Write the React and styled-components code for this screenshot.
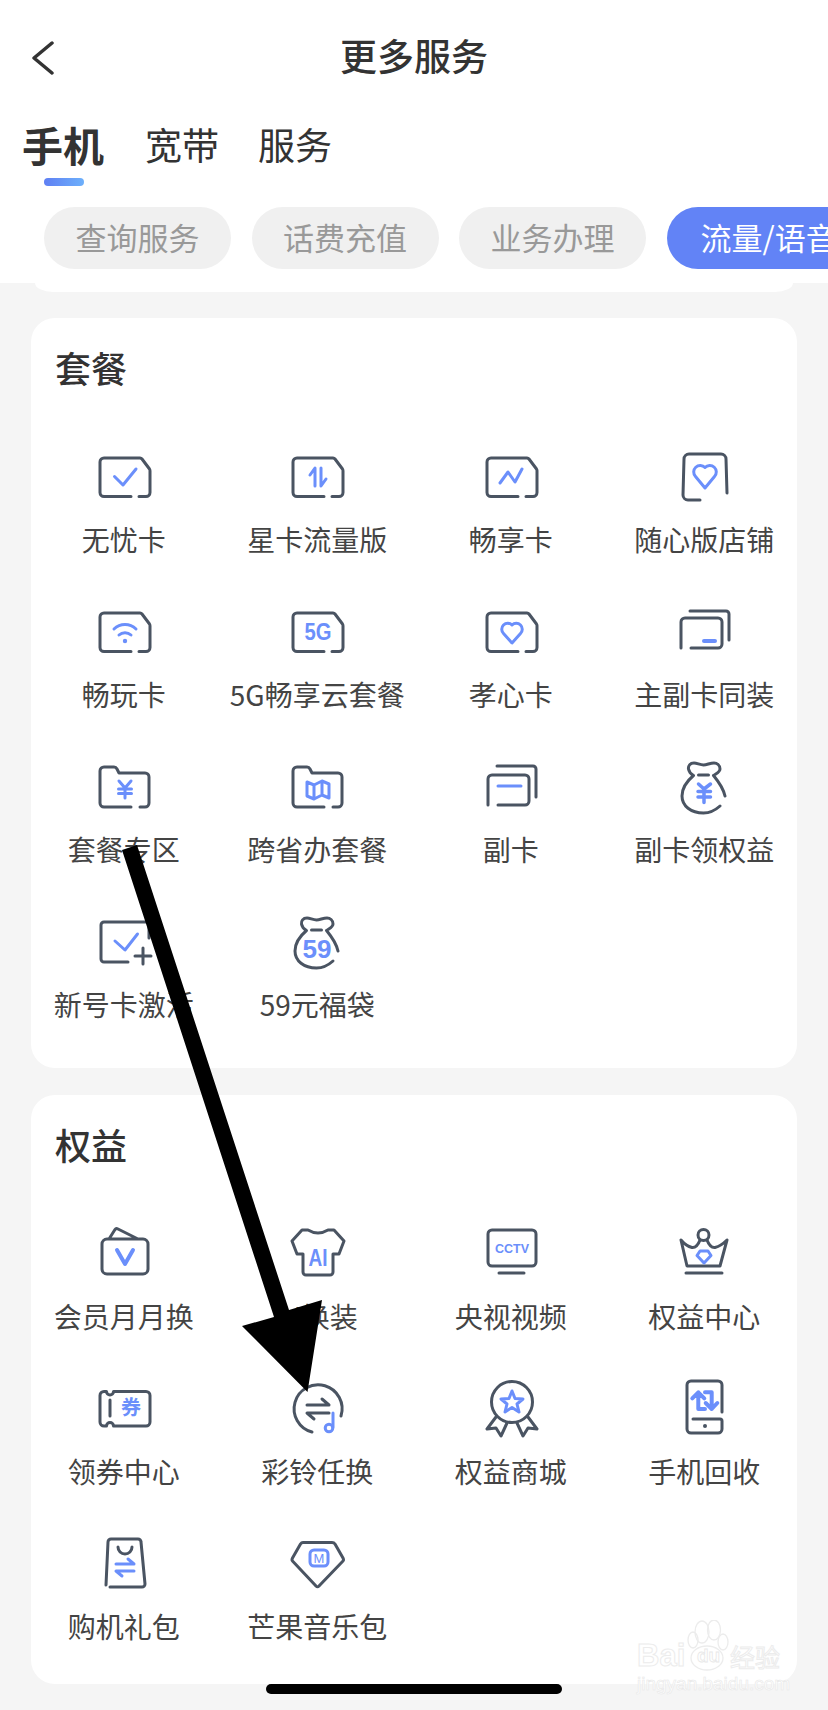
import React from "react";
import styled, { createGlobalStyle } from "styled-components";

const DARK = "#4a5462";
const BLUE = "#6b8ffb";
const CJK = `"Noto Sans CJK SC", "Liberation Sans", sans-serif`;

const Dark = ({ d, w = 3 }) => (
  <path d={d} fill="none" stroke={DARK} strokeWidth={w} strokeLinecap="round" strokeLinejoin="round" />
);
const Blue = ({ d, w = 3 }) => (
  <path d={d} fill="none" stroke={BLUE} strokeWidth={w} strokeLinecap="round" strokeLinejoin="round" />
);
const Label = ({ x = 32, y, size, font = "Liberation Sans", weight = 700, children, len }) => (
  <text x={x} y={y} fontSize={size} fontFamily={font} fontWeight={weight} fill={BLUE} textAnchor="middle" textLength={len} lengthAdjust={len ? "spacingAndGlyphs" : undefined}>
    {children}
  </text>
);
const Svg = ({ children }) => (
  <IconBox viewBox="0 0 64 64" aria-hidden="true">
    {children}
  </IconBox>
);

const SIM = "M38 51.5H11a4 4 0 0 1-4-4V17a4 4 0 0 1 4-4H47a2.5 2.5 0 0 1 2 1L56.5 24a3 3 0 0 1 .5 2V47.5a4 4 0 0 1-4 4H46";
const FOLDER = "M38 52H11a4 4 0 0 1-4-4V16a4 4 0 0 1 4-4H21q2 0 3 2l2 4H52a4 4 0 0 1 4 4V48a4 4 0 0 1-4 4H47";
const HEART = "M32 43L23.500 33.500a6 6 0 0 1 8.500-8.500a6 6 0 0 1 8.500 8.500Z";
const BAG =
  "M52 41C50 32 45 26 40.500 20.500C44 18 47 17 47 14C47 10 44 8 41 8C37 8 34 10 30.500 10C27 10 24 8 21 8C17 8 15 11 15.500 14C16 17 18 19 20.500 20.500C14 26 9 33 9 41C9 51 18 58 30.500 58C37 58 42 55.500 47 51M25.500 20H35.500";

const icons = {
  check: <><Dark d={SIM} /><Blue d="M21.500 31.500L30 40L43 24" /></>,
  updown: <><Dark d={SIM} /><Blue d="M29 41V23L24 30M35 23V41L40 34" /></>,
  trend: <><Dark d={SIM} /><Blue d="M20 38L28 27L35 37L42 24" /></>,
  store: (
    <>
      <Dark d="M54 48L53 14a5 5 0 0 0-5-5H16a5 5 0 0 0-5 5L10 50a5 5 0 0 0 5 5H27" />
      <Blue d="M32 43L22.500 31.500a6.500 6.500 0 0 1 9.500-9a6.500 6.500 0 0 1 9.500 9Z" />
    </>
  ),
  wifi: (
    <>
      <Dark d={SIM} />
      <Blue d="M21 29a16 16 0 0 1 22 0M26 35a9 9 0 0 1 12 0" />
      <circle cx="32" cy="41" r="2.200" fill={BLUE} />
    </>
  ),
  fiveG: <><Dark d={SIM} /><Label y={40} size={23} len={27}>5G</Label></>,
  heart: <><Dark d={SIM} /><Blue d={HEART} /></>,
  twin: (
    <>
      <Dark d="M8 48V22a4 4 0 0 1 4-4H45a4 4 0 0 1 4 4V44a4 4 0 0 1-4 4H18M17 11H53a3 3 0 0 1 3 3V40" />
      <Blue d="M31 41H42" w={4} />
    </>
  ),
  folderYen: <><Dark d={FOLDER} /><Blue d="M26 26L32 33L38 26M25.500 34H38.500M25.500 38.500H38.500M32 33V43" /></>,
  folderMap: <><Dark d={FOLDER} /><Blue d="M21 27L28 30L36 26L43 29V43L36 40L28 44L21 41ZM28 30V44M36 26V40" /></>,
  vice: (
    <>
      <Dark d="M8 50V24a4 4 0 0 1 4-4H45a4 4 0 0 1 4 4V46a4 4 0 0 1-4 4H18M17 11H53a3 3 0 0 1 3 3V42" />
      <Blue d="M18 31H41" />
    </>
  ),
  bagYen: <><Dark d={BAG} /><Blue d="M25.500 29L31 34L37.500 29M25 36.500H37.500M25 42H37.500M31 34V47.500" w={3.500} /></>,
  activate: (
    <>
      <Dark d="M35 52H11a3 3 0 0 1-3-3V15a3 3 0 0 1 3-3H53a3 3 0 0 1 3 3V28M50 38V54M42 46H58" />
      <Blue d="M22 31L32 40L44.500 24" />
    </>
  ),
  bag59: <><Dark d={BAG} /><Label x={31} y={48} size={25} len={29}>59</Label></>,
  wallet: (
    <>
      <Dark d="M14 17H50a5 5 0 0 1 5 5V47a5 5 0 0 1-5 5H14a5 5 0 0 1-5-5V22a5 5 0 0 1 5-5ZM16 17L22 7.500Q23 6 25 7L45 17" />
      <Blue d="M24 28L32 42L40 28" w={4} />
    </>
  ),
  shirt: (
    <>
      <Dark d="M22 8q10 6 20 0H48L58 19L53 32H47V50a3 3 0 0 1-3 3H20a3 3 0 0 1-3-3V32H11L6 19L16 8Z" />
      <Label y={44} size={23} len={19}>AI</Label>
    </>
  ),
  cctv: (
    <>
      <Dark d="M12 8H52a4 4 0 0 1 4 4V40a4 4 0 0 1-4 4H12a4 4 0 0 1-4-4V12a4 4 0 0 1 4-4ZM19 51H44" />
      <Label y={31} size={13} len={34}>CCTV</Label>
    </>
  ),
  crown: (
    <>
      <Dark d="M27 18Q24 26 19 25.500Q13 24 8 18L14 44H47L54 18Q48 24 42 25.500Q37 26 34 18M13 51H49" />
      <circle cx="30.500" cy="13" r="5.500" fill="none" stroke={DARK} strokeWidth="3" />
      <Blue d="M27 29H35L38 33.500L31 41L24 33.500Z" />
    </>
  ),
  ticket: (
    <>
      <Dark d="M20.500 14.500H53a4 4 0 0 1 4 4V45a4 4 0 0 1-4 4H20.500a3.500 3.500 0 0 0-7 0H11a4 4 0 0 1-4-4V18.500a4 4 0 0 1 4-4H13.500a3.500 3.500 0 0 0 7 0ZM17 23V39" />
      <Label x={38} y={38} size={20} font="Noto Sans CJK SC">券</Label>
    </>
  ),
  ring: (
    <>
      <Dark d="M26 55A24 24 0 1 1 55 39M21 28H43L36 22M43 36H21L28 42" />
      <Blue d="M47 36V50" />
      <circle cx="43" cy="51" r="3.800" fill="none" stroke={BLUE} strokeWidth="3" />
    </>
  ),
  medal: (
    <>
      <circle cx="32" cy="25" r="20.500" fill="none" stroke={DARK} strokeWidth="3" />
      <Dark d="M16 40L7 52L16 51L21 59L27 46M48 40L57 52L48 51L43 59L37 46" />
      <Blue d="M32 14L35 21.500L43 22L37 27L39 35L32 30.500L25 35L27 27L21 22L29 21.500Z" />
    </>
  ),
  phone: (
    <>
      <Dark d="M49 35V8a4 4 0 0 0-4-4H18a4 4 0 0 0-4 4V52a4 4 0 0 0 4 4H45a4 4 0 0 0 4-4V44a2 2 0 0 0-2-2H20" />
      <circle cx="32" cy="49" r="2" fill={DARK} />
      <Blue d="M32 32H25.300V15.300L19.300 21.300M25.300 15.300L31.300 21.300M32 15.300H38.700V32L32.700 26M38.700 32L44.300 26" w={4} />
    </>
  ),
  gift: (
    <>
      <Dark d="M13 53L15 10a3 3 0 0 1 3-3H45a3 3 0 0 1 3 3L52 52a3 3 0 0 1-3 3H17M25 15a7 7 0 0 0 14 0" />
      <Blue d="M23 32H41L35 27M41 39H23L29 44" />
    </>
  ),
  mango: (
    <>
      <Dark d="M17 10.500H46Q48 10.500 49 12L57 26Q58 28 57 29L33 54Q31.500 55.500 30 54L6.500 29Q5.500 28 6.500 26L14.500 12Q15.500 10.500 17 10.500Z" />
      <rect x="24" y="18" width="18" height="16" rx="4" fill="none" stroke={BLUE} strokeWidth="3" />
      <Label x={33} y={31} size={13} weight={400}>M</Label>
    </>
  ),
};

const pills = ["查询服务", "话费充值", "业务办理", "流量/语音"];

const sections = [
  {
    title: "套餐",
    bottom: 46,
    items: [
      ["check", "无忧卡"], ["updown", "星卡流量版"], ["trend", "畅享卡"], ["store", "随心版店铺"],
      ["wifi", "畅玩卡"], ["fiveG", "5G畅享云套餐"], ["heart", "孝心卡"], ["twin", "主副卡同装"],
      ["folderYen", "套餐专区"], ["folderMap", "跨省办套餐"], ["vice", "副卡"], ["bagYen", "副卡领权益"],
      ["activate", "新号卡激活"], ["bag59", "59元福袋"],
    ],
  },
  {
    title: "权益",
    bottom: 40,
    items: [
      ["wallet", "会员月月换"], ["shirt", "AI换装"], ["cctv", "央视视频"], ["crown", "权益中心"],
      ["ticket", "领券中心"], ["ring", "彩铃任换"], ["medal", "权益商城"], ["phone", "手机回收"],
      ["gift", "购机礼包"], ["mango", "芒果音乐包"],
    ],
  },
];

export default function App() {
  return (
    <Page>
      <GlobalStyle />
      <Header>
        <NavBar>
          <BackIcon viewBox="0 0 24 34" aria-hidden="true">
            <path d="M21 2L3 17L21 32" fill="none" stroke="#333" strokeWidth="3.500" strokeLinecap="round" strokeLinejoin="round" />
          </BackIcon>
          <NavTitle>更多服务</NavTitle>
        </NavBar>
        <Tabs>
          <Tab $active>
            手机
            <TabMark />
          </Tab>
          <Tab>宽带</Tab>
          <Tab>服务</Tab>
        </Tabs>
        <Pills>
          {pills.map((p, i) => (
            <Pill key={p} $active={i === 3}>{p}</Pill>
          ))}
        </Pills>
      </Header>
      <PrevCardEnd />
      <Cards>
        {sections.map((s) => (
          <Card key={s.title} $bottom={s.bottom}>
            <CardTitle>{s.title}</CardTitle>
            <Grid>
              {s.items.map(([icon, name]) => (
                <Item key={name}>
                  <Svg>{icons[icon]}</Svg>
                  <ItemName>{name}</ItemName>
                </Item>
              ))}
            </Grid>
          </Card>
        ))}
      </Cards>

      <Watermark>
        <Paw viewBox="0 0 50 58" aria-hidden="true">
          <g fill="none" stroke="#ececec" strokeWidth="1.300">
            <ellipse cx="22" cy="12" rx="7" ry="11" />
            <ellipse cx="34" cy="10" rx="6.500" ry="10" />
            <ellipse cx="13" cy="20" rx="5" ry="8" />
            <ellipse cx="43" cy="22" rx="5" ry="8" />
            <ellipse cx="27" cy="38" rx="16" ry="12" fill="#fff" />
          </g>
        </Paw>
        <MarkRow>
          <MarkBai>Bai</MarkBai>
          <MarkDu>du</MarkDu>
          <MarkCjk>经验</MarkCjk>
        </MarkRow>
        <MarkUrl>jingyan.baidu.com</MarkUrl>
      </Watermark>
      <HomeBar />
      <Arrow viewBox="0 0 828 1710" aria-hidden="true">
        <polygon points="122,850 137,845 289,1310 322,1300 307.500,1392 242,1326 274,1317" fill="#000" />
      </Arrow>
    </Page>
  );
}

const GlobalStyle = createGlobalStyle`
  body {
    margin: 0;
    background: #f5f5f5;
    font-family: ${CJK};
  }
`;

const Page = styled.div`
  position: relative;
  width: 828px;
  height: 1710px;
  overflow: hidden;
  background: #f5f5f5;
`;

const Header = styled.header`
  height: 283px;
  background: #fff;
  overflow: hidden;
`;

const NavBar = styled.div`
  position: relative;
  height: 114px;
  padding-bottom: 4px;
  box-sizing: border-box;
  display: flex;
  align-items: center;
  justify-content: center;
`;

const BackIcon = styled.svg`
  position: absolute;
  left: 31px;
  top: 41px;
  width: 24px;
  height: 34px;
`;

const NavTitle = styled.h1`
  margin: 0;
  font-size: 37px;
  font-weight: 500;
  line-height: 1;
  color: #333;
`;

const Tabs = styled.div`
  display: flex;
  align-items: flex-start;
  gap: 39px;
  padding-left: 22px;
  height: 72px;
`;

const Tab = styled.div`
  font-size: ${(p) => (p.$active ? "41px" : "37px")};
  font-weight: ${(p) => (p.$active ? 700 : 400)};
  line-height: 60px;
  margin-right: ${(p) => (p.$active ? "2px" : "0")};
  color: #333;
`;

const TabMark = styled.div`
  width: 40px;
  height: 8px;
  margin: 4px 0 0 22px;
  border-radius: 4px;
  background: linear-gradient(90deg, #5f7ff3, #6db0fb);
`;

const Pills = styled.div`
  display: flex;
  gap: 20.5px;
  margin-top: 21px;
  padding-left: 44px;
  overflow: hidden;
`;

const Pill = styled.div`
  flex-shrink: 0;
  height: 62px;
  padding: 0 ${(p) => (p.$active ? "34px" : "31.5px")};
  border-radius: 31px;
  font-size: 31px;
  line-height: 60px;
  white-space: nowrap;
  color: ${(p) => (p.$active ? "#fff" : "#999")};
  background: ${(p) => (p.$active ? "#6283f6" : "#f0f0f0")};
`;

const PrevCardEnd = styled.div`
  height: 9px;
  margin: 0 35px;
  background: #fff;
  border-radius: 0 0 18px 18px / 0 0 9px 9px;
`;

const Cards = styled.main`
  display: flex;
  flex-direction: column;
  gap: 27px;
  margin: 26px 31px 0;
`;

const Card = styled.section`
  padding: 23px 0 ${(p) => p.$bottom}px;
  background: #fff;
  border-radius: 24px;
`;

const CardTitle = styled.h2`
  margin: 0;
  padding-left: 24px;
  font-size: 36px;
  font-weight: 500;
  line-height: 52px;
  color: #333;
`;

const Grid = styled.div`
  display: grid;
  grid-template-columns: repeat(4, 193.5px);
  row-gap: 43px;
  margin: 52px -4px 0;
`;

const Item = styled.div`
  display: flex;
  flex-direction: column;
  align-items: center;
  gap: 12px;
`;

const IconBox = styled.svg`
  width: 64px;
  height: 64px;
  margin-left: 2px;
  display: block;
`;

const ItemName = styled.div`
  font-size: 28px;
  line-height: 36px;
  white-space: nowrap;
  color: #444;
`;

const Watermark = styled.div`
  position: absolute;
  left: 637px;
  top: 1620px;
  width: 160px;
  pointer-events: none;
`;

const Paw = styled.svg`
  display: block;
  width: 50px;
  height: 58px;
  margin: 0 0 -40px 43px;
`;

const MarkRow = styled.div`
  position: relative;
  display: flex;
  align-items: center;
  height: 36px;
  white-space: nowrap;
`;

const MarkBai = styled.span`
  width: 60px;
  font-family: "Liberation Sans", sans-serif;
  font-size: 31px;
  font-weight: 700;
  color: #fff;
  -webkit-text-stroke: 1px #ececec;
`;

const MarkDu = styled.span`
  width: 33px;
  font-family: "Liberation Sans", sans-serif;
  font-size: 19px;
  font-weight: 700;
  color: #fff;
  -webkit-text-stroke: 0.8px #e8e8e8;
`;

const MarkCjk = styled.span`
  font-size: 25px;
  color: #fff;
  -webkit-text-stroke: 1px #ececec;
`;

const MarkUrl = styled.div`
  margin-top: 1px;
  font-family: "Liberation Sans", sans-serif;
  font-size: 19px;
  line-height: 18px;
  white-space: nowrap;
  color: #fff;
  -webkit-text-stroke: 0.6px #e8e8e8;
`;

const HomeBar = styled.div`
  position: absolute;
  left: 266px;
  top: 1684px;
  width: 296px;
  height: 10px;
  border-radius: 5px;
  background: #000;
`;

const Arrow = styled.svg`
  position: absolute;
  inset: 0;
  width: 828px;
  height: 1710px;
  pointer-events: none;
`;
